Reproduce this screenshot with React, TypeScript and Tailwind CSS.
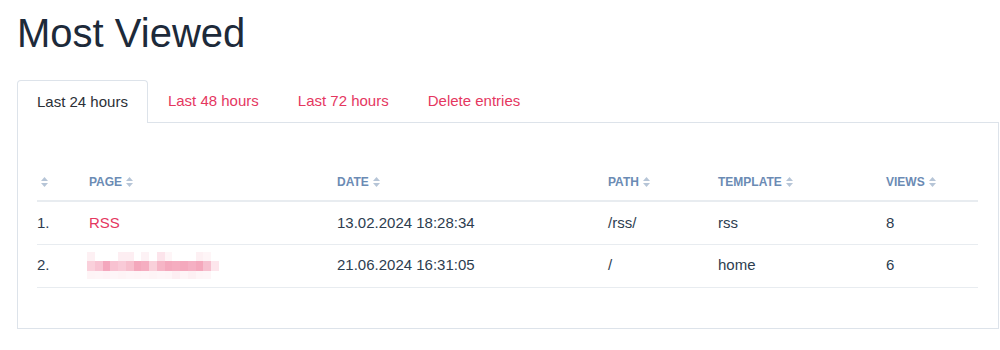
import React from "react";

const font = { fontFamily: '"Liberation Sans", Arial, sans-serif' };

function SortIcon({ className = "" }: { className?: string }) {
  return (
    <svg width="7" height="10" viewBox="0 0 7 10" className={className} aria-hidden="true">
      <polygon points="0,4 3.5,0 7,4" fill="#b6c5d7" />
      <polygon points="0,6 3.5,10 7,6" fill="#b6c5d7" />
    </svg>
  );
}

const topRow = [
  "bg-[#fdf0f3]", "bg-[#ffffff]", "bg-[#ffffff]", "bg-[#ffffff]", "bg-[#fdeef2]", "bg-[#fdeef2]",
  "bg-[#ffffff]", "bg-[#fdf2f5]", "bg-[#ffffff]", "bg-[#fce4eb]", "bg-[#fef5f7]", "bg-[#ffffff]",
  "bg-[#ffffff]", "bg-[#ffffff]", "bg-[#fdf0f3]", "bg-[#fef5f7]", "bg-[#ffffff]",
];
const midRow = [
  "bg-[#fad0db]", "bg-[#f8c3d2]", "bg-[#f4a7bd]", "bg-[#f8c2d1]", "bg-[#f9cad7]", "bg-[#f7bfcd]",
  "bg-[#f4a8bc]", "bg-[#f5aec1]", "bg-[#f9d0da]", "bg-[#f6b5c6]", "bg-[#f4a9bd]", "bg-[#f5adc0]",
  "bg-[#f4a9bd]", "bg-[#f5b0c3]", "bg-[#f4a8bc]", "bg-[#f6c0cf]", "bg-[#fde6ec]",
];
const botRow = [
  "bg-[#fef4f6]", "bg-[#fef5f7]", "bg-[#fef3f6]", "bg-[#fef6f8]", "bg-[#fef4f6]", "bg-[#fef6f8]",
  "bg-[#fef5f7]", "bg-[#fef6f8]", "bg-[#fef4f6]", "bg-[#fef6f8]", "bg-[#fef5f7]", "bg-[#fdeef2]",
  "bg-[#fef5f7]", "bg-[#fdf0f3]", "bg-[#fef5f7]", "bg-[#fef6f8]", "bg-[#ffffff]",
];

function Blur() {
  return (
    <div className="ml-[-2px] grid w-[132px] grid-cols-[repeat(17,1fr)] grid-rows-[9px_10px_8px]">
      {topRow.map((c, i) => (
        <div key={"t" + i} className={c} />
      ))}
      {midRow.map((c, i) => (
        <div key={"m" + i} className={c} />
      ))}
      {botRow.map((c, i) => (
        <div key={"b" + i} className={c} />
      ))}
    </div>
  );
}

export default function App() {
  const th = "h-[38px] border-b-2 border-[#e8ecf0] p-0 text-left align-middle text-[12px] font-bold uppercase text-[#6b8bb4]";
  const td = "h-[43px] border-b border-[#e8ecf0] p-0 align-middle text-[15px] text-[#2d3d4f]";
  return (
    <div style={font} className="min-h-[350px] bg-white pl-[17px] pt-[10px]">
      <h1 className="text-[40px] leading-[46px] font-normal text-[#1d2a3a]">Most Viewed</h1>
      <div className="mt-[24px] flex">
        <div className="relative z-10 mb-[-1px] flex h-[43px] items-center rounded-t-[4px] border border-b-0 border-[#dde3ea] bg-white px-[19px] text-[15px] text-[#2b2f36]">
          Last 24 hours
        </div>
        <div className="flex h-[42px] items-center px-[20px] text-[15px] text-[#e5375f]">Last 48 hours</div>
        <div className="flex h-[42px] items-center px-[19px] text-[15px] text-[#e5375f]">Last 72 hours</div>
        <div className="flex h-[42px] items-center px-[20px] text-[15px] text-[#e5375f]">Delete entries</div>
      </div>
      <div className="w-[982px] border border-[#dde3ea] px-[19px] pt-[40px] pb-[40px]">
        <table className="w-[941px] table-fixed border-collapse">
          <thead>
            <tr>
              <th className={th + " w-[52px]"}>
                <SortIcon className="ml-[4px]" />
              </th>
              <th className={th + " w-[248px]"}>
                <span className="inline-flex items-center gap-[4px]">Page<SortIcon /></span>
              </th>
              <th className={th + " w-[271px]"}>
                <span className="inline-flex items-center gap-[4px]">Date<SortIcon /></span>
              </th>
              <th className={th + " w-[110px]"}>
                <span className="inline-flex items-center gap-[4px]">Path<SortIcon /></span>
              </th>
              <th className={th + " w-[168px]"}>
                <span className="inline-flex items-center gap-[4px]">Template<SortIcon /></span>
              </th>
              <th className={th + " w-[92px]"}>
                <span className="inline-flex items-center gap-[4px]">Views<SortIcon /></span>
              </th>
            </tr>
          </thead>
          <tbody>
            <tr>
              <td className={td}>1.</td>
              <td className={td + " text-[#e5375f]"}>RSS</td>
              <td className={td}>13.02.2024 18:28:34</td>
              <td className={td}>/rss/</td>
              <td className={td}>rss</td>
              <td className={td}>8</td>
            </tr>
            <tr>
              <td className={td}>2.</td>
              <td className={td}>
                <Blur />
              </td>
              <td className={td}>21.06.2024 16:31:05</td>
              <td className={td}>/</td>
              <td className={td}>home</td>
              <td className={td}>6</td>
            </tr>
          </tbody>
        </table>
      </div>
    </div>
  );
}
